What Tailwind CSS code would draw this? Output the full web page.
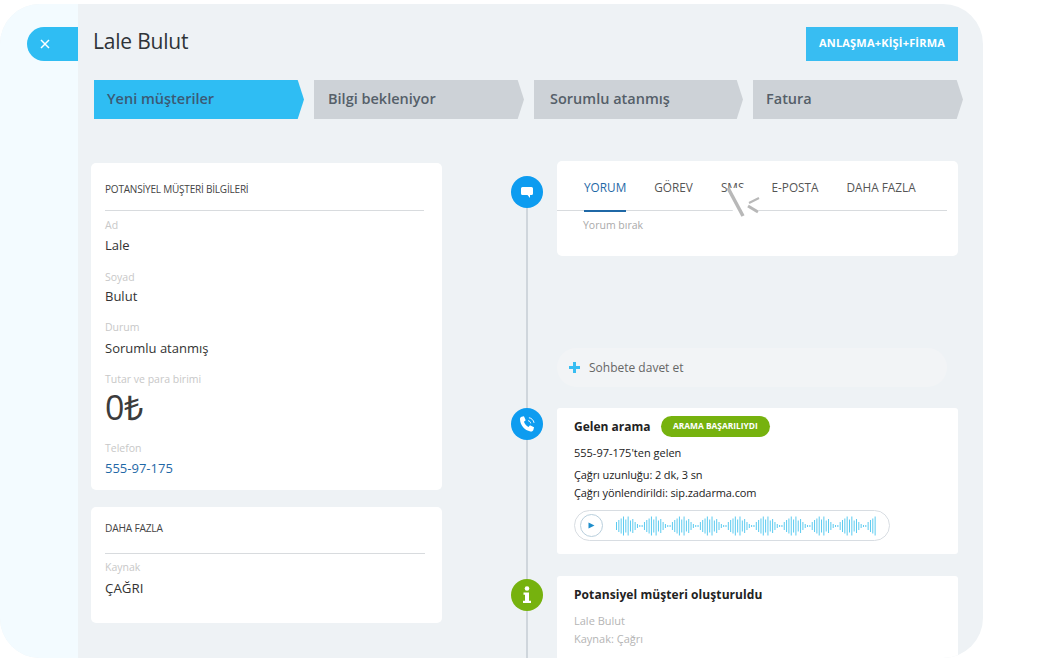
<!DOCTYPE html>
<html lang="tr">
<head>
  <meta charset="UTF-8">
  <title>Lale Bulut</title>
  <script src="https://cdn.jsdelivr.net/npm/@tailwindcss/browser@4"></script>
</head>
<body class="bg-white font-['Open_Sans',sans-serif] text-[#333]">
  <div class="h-[664px] w-[1047px] overflow-hidden pt-[4px]">
    <div class="flex h-[654px] w-[983px] overflow-hidden rounded-[40px] bg-[#eef2f5]">

      <!-- left rail -->
      <div class="w-[78px] shrink-0 bg-[#f3fbff] pt-[23px]">
        <div class="ml-[27px] flex h-[34px] w-[51px] items-center rounded-l-[17px] bg-[#2fbdf3] pl-[13px]">
          <svg width="10" height="10" viewBox="0 0 10 10" fill="none" stroke="#fff" stroke-width="1.5"><path d="M1 1l8 8M9 1l-8 8"/></svg>
        </div>
      </div>

      <!-- main -->
      <div class="relative min-w-0 flex-1">
        <!-- header -->
        <div class="flex h-[57px] items-start pt-[23px] pr-[25px]">
          <h1 class="ml-[15px] mt-[1px] text-[21px] leading-[27px] tracking-[-0.2px] text-[#2f3438]">Lale Bulut</h1>
          <button class="ml-auto h-[34px] w-[152px] bg-[#38bdf2] pb-[1px] text-[11px] font-bold tracking-[0.2px] text-white">ANLAŞMA+KİŞİ+FİRMA</button>
        </div>

        <!-- stages -->
        <div class="mt-[19px] ml-[16px] flex h-[39px] gap-[10px] text-[14.5px] font-semibold">
          <div class="flex w-[210px] items-center bg-[#2fbdf3] pb-[2px] pl-[13px] text-[#3b5a75] [clip-path:polygon(0_0,97%_0,100%_50%,97%_100%,0_100%)]">Yeni müşteriler</div>
          <div class="flex w-[210px] items-center bg-[#cdd2d7] pb-[2px] pl-[14px] text-[#555f69] [clip-path:polygon(0_0,97%_0,100%_50%,97%_100%,0_100%)]">Bilgi bekleniyor</div>
          <div class="flex w-[209px] items-center bg-[#cdd2d7] pb-[2px] pl-[16px] text-[#555f69] [clip-path:polygon(0_0,97%_0,100%_50%,97%_100%,0_100%)]">Sorumlu atanmış</div>
          <div class="flex w-[210px] items-center bg-[#cdd2d7] pb-[2px] pl-[13px] text-[#555f69] [clip-path:polygon(0_0,97%_0,100%_50%,97%_100%,0_100%)]">Fatura</div>
        </div>

        <div class="flex">
          <!-- left column -->
          <div class="ml-[13px] mt-[44px] w-[351px] shrink-0">
            <div class="h-[327px] rounded-[5px] bg-white px-[14px] pt-[19px]">
              <h2 class="text-[10px] leading-[14px] tracking-[-0.2px] text-[#444]">POTANSİYEL MÜŞTERİ BİLGİLERİ</h2>
              <div class="mt-[14px] mr-[4px] border-t border-[#d8dbde]"></div>
              <p class="mt-[7px] text-[10.5px] leading-[14px] text-[#c8c8c8]">Ad</p>
              <p class="mt-[3px] text-[13px] leading-[20px]">Lale</p>
              <p class="mt-[15px] text-[10.5px] leading-[14px] text-[#c8c8c8]">Soyad</p>
              <p class="mt-[2px] text-[13px] leading-[20px]">Bulut</p>
              <p class="mt-[14px] text-[10.5px] leading-[14px] text-[#c8c8c8]">Durum</p>
              <p class="mt-[4px] text-[13px] leading-[20px]">Sorumlu atanmış</p>
              <p class="mt-[14px] text-[10.5px] leading-[14px] text-[#c8c8c8]">Tutar ve para birimi</p>
              <p class="mt-[1px] text-[34px] leading-[40px] text-[#3c3c3c]">0₺</p>
              <p class="mt-[14px] text-[10.5px] leading-[14px] text-[#c8c8c8]">Telefon</p>
              <p class="mt-[3px] text-[13px] leading-[20px] text-[#1f68a6]">555-97-175</p>
            </div>
            <div class="mt-[17px] h-[116px] rounded-[5px] bg-white px-[14px] pt-[14px]">
              <h2 class="text-[10.2px] leading-[14px] tracking-[-0.2px] text-[#444]">DAHA FAZLA</h2>
              <div class="mt-[18px] mr-[3px] border-t border-[#d8dbde]"></div>
              <p class="mt-[6px] text-[10.5px] leading-[14px] text-[#c8c8c8]">Kaynak</p>
              <p class="mt-[4px] text-[13.3px] leading-[20px]">ÇAĞRI</p>
            </div>
          </div>

          <!-- timeline -->
          <div class="relative ml-[69px] w-[32px] shrink-0">
            <div class="absolute left-[15px] top-[75px] h-[480px] w-[2px] bg-[#cfd6dc]"></div>
            <div class="absolute left-0 top-[57px] flex h-[32px] w-[32px] items-center justify-center rounded-full bg-[#0d9cf0]">
              <svg width="14" height="14" viewBox="0 0 14 14" fill="#fff"><path d="M2.500 2h9A1.500 1.500 0 0 1 13 3.500v5A1.500 1.500 0 0 1 11.500 10H10v3L7.500 10h-5A1.500 1.500 0 0 1 1 8.500v-5A1.500 1.500 0 0 1 2.500 2z"/></svg>
            </div>
            <div class="absolute left-0 top-[289px] flex h-[32px] w-[32px] items-center justify-center rounded-full bg-[#0d9cf0]">
              <svg width="19" height="19" viewBox="0 0 16 16" fill="none"><path fill="#fff" d="M3 1.500l2 -.5 1.500 3.500-1.500 1.200c.6 1.800 2 3.400 3.800 4.300l1.300-1.400 3.400 1.700-.5 2.100c-.3 1.100-1.400 1.800-2.500 1.500C5.500 12.800 2 8.800 1.700 3.800 1.600 2.700 2 1.800 3 1.500z"/><path stroke="#fff" stroke-width=".8" d="M8.500 4.800c1.200.2 2 1 2.200 2.200M9.200 2.300c2.200.3 4 2.100 4.300 4.300"/></svg>
            </div>
            <div class="absolute left-0 top-[460px] flex h-[32px] w-[32px] items-center justify-center rounded-full bg-[#76b20e]">
              <svg width="12" height="18" viewBox="0 0 12 18" fill="#fff"><circle cx="6" cy="2.500" r="2.300"/><path d="M2.500 6.500H8v8.200h2V17H2v-2.300h2V8.800H2.500z"/></svg>
            </div>
          </div>

          <!-- right column -->
          <div class="ml-[14px] mt-[42px] w-[401px] shrink-0">
            <div class="relative h-[95px] rounded-[5px] bg-white">
              <div class="flex h-[49px] pl-[27px] pt-[16px] text-[11.8px] leading-[20px] text-[#555]">
                <span class="relative text-[#1f68a6]">YORUM<span class="absolute left-0 top-[33px] h-[2px] w-full bg-[#1f68a6]"></span></span>
                <span class="ml-[28px]">GÖREV</span>
                <span class="ml-[28px]">SMS</span>
                <span class="ml-[27px]">E-POSTA</span>
                <span class="ml-[28px]">DAHA FAZLA</span>
              </div>
              <div class="mr-[11px] border-t border-[#d8dbde]"></div>
              <p class="ml-[26px] mt-[6px] text-[10.5px] leading-[16px] text-[#aaa]">Yorum bırak</p>
              <!-- cursor artefact -->
              <svg class="absolute left-[165px] top-[24px]" width="42" height="36" viewBox="0 0 42 36" fill="none">
                <path fill="#fff" d="M8 3L24 3 38 14 36 30 25 36 12 36z"/>
                <path stroke="#b8b8b8" stroke-width="3.500" d="M6 3l15 28"/>
                <path stroke="#b8b8b8" stroke-width="2" d="M37 13l-10 5"/>
                <path stroke="#b8b8b8" stroke-width="3" d="M26 21l10 6"/>
              </svg>
            </div>
            <div class="mt-[92px] mr-[11px] flex h-[39px] items-center rounded-full bg-[#f2f4f6] pl-[12px] text-[12px] text-[#666]">
              <svg class="mr-[9px]" width="11" height="11" viewBox="0 0 11 11" fill="#38bdf2"><path d="M4 0h3v4h4v3H7v4H4V7H0V4h4z"/></svg>Sohbete davet et
            </div>
            <div class="mt-[21px] h-[146px] rounded-[3px] bg-white pl-[17px] pt-[8px]">
              <div class="flex items-center">
                <h3 class="text-[12px] font-bold text-[#222]">Gelen arama</h3>
                <span class="ml-[10px] flex h-[21px] items-center rounded-full bg-[#76b20e] pl-[12.500px] pr-[12px] text-[8.4px] font-bold text-white">ARAMA BAŞARILIYDI</span>
              </div>
              <p class="mt-[7px] text-[11px] leading-[18px] text-[#222]">555-97-175'ten gelen</p>
              <p class="mt-[4px] text-[11px] leading-[18px] tracking-[-0.1px] text-[#222]">Çağrı uzunluğu: 2 dk, 3 sn</p>
              <p class="text-[11px] leading-[18px] tracking-[-0.1px] text-[#222]">Çağrı yönlendirildi: sip.zadarma.com</p>
              <div class="mt-[8px] flex h-[31px] w-[316px] items-center rounded-full border border-[#d8dde2] pl-[5px]">
                <div class="flex h-[23px] w-[23px] items-center justify-center rounded-full border border-[#b9cfdd]">
                  <svg width="7" height="7" viewBox="0 0 7 7" fill="#1f8ecb"><path d="M0.500 0.500L6.500 3.500 0.500 6.500z"/></svg>
                </div>
                <svg id="wave" class="ml-[13px]" width="262" height="22" viewBox="0 0 262 22"></svg>
              </div>
            </div>
            <div class="mt-[22px] h-[120px] rounded-[3px] bg-white pl-[17px] pt-[9px]">
              <h3 class="text-[12px] font-bold leading-[20px] tracking-[0.07px] text-[#222]">Potansiyel müşteri oluşturuldu</h3>
              <p class="mt-[7px] text-[11px] leading-[18px] text-[#b5b5b5]">Lale Bulut</p>
              <p class="text-[11px] leading-[18px] text-[#b5b5b5]">Kaynak: Çağrı</p>
            </div>
          </div>
        </div>
      </div>
    </div>
  </div>

  <script>
    // waveform bars, repeating every 28px
    const wave = document.getElementById('wave');
    const shape = [8, 12, 15, 19, 13, 19, 11, 14, 8, 4, 2, 2];
    let d = '';
    for (let i = 0; i < 112; i++) {
      const h = shape[i % shape.length];
      const x = i * 2.33 + 0.5;
      d += `M${x} ${11 - h / 2}v${h}`;
    }
    const path = document.createElementNS('http://www.w3.org/2000/svg', 'path');
    path.setAttribute('d', d);
    path.setAttribute('stroke', '#5ccbf0');
    path.setAttribute('stroke-width', '1');
    path.setAttribute('fill', 'none');
    wave.appendChild(path);
  </script>
</body>
</html>
